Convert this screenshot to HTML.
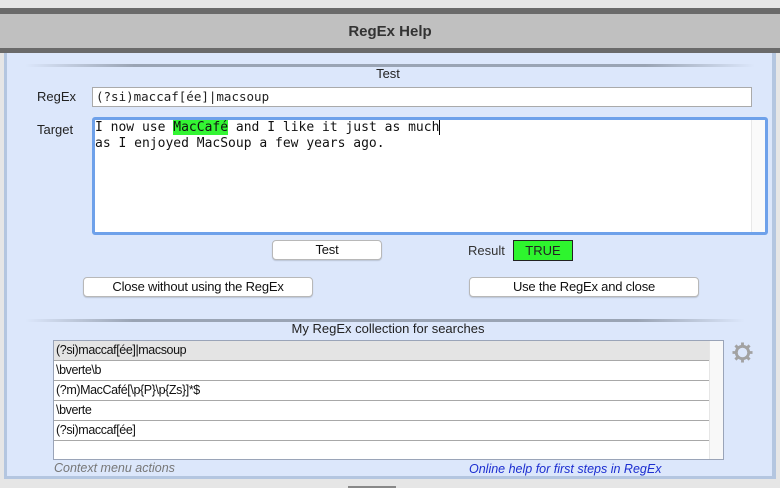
<!DOCTYPE html>
<html><head><meta charset="utf-8"><style>
*{margin:0;padding:0;box-sizing:border-box}
body{width:780px;height:488px;overflow:hidden;background:#e6e6e6;font-family:"Liberation Sans",sans-serif;position:relative;font-size:12px;color:#222}
.a{position:absolute}
.btn{position:absolute;background:#fff;border:1px solid #b8b8b8;border-radius:4px;text-align:center;font-size:13px;line-height:18px;box-shadow:0 1px 1px rgba(0,0,0,.15);color:#111;letter-spacing:-0.2px}
.sep{position:absolute;height:3px;background:linear-gradient(to right,rgba(150,160,180,0),#9aa4b4 15%,#9aa4b4 85%,rgba(150,160,180,0));border-radius:2px}
.row{position:absolute;left:54px;width:655px;height:20px;border-bottom:1px solid #a8a8a8;background:#fff;font-size:12.5px;line-height:19px;padding-left:2px;letter-spacing:-0.4px;color:#111}
.mono{font-family:"DejaVu Sans Mono","Liberation Mono",monospace;font-size:13px}
</style></head><body>
<div class="a" style="left:0;top:8px;width:780px;height:6px;background:#6a6a6a"></div>
<div class="a" style="left:0;top:14px;width:780px;height:34px;background:#c0c0c0;text-align:center;font-size:15px;font-weight:bold;line-height:36px;color:#333">RegEx Help</div>
<div class="a" style="left:0;top:48px;width:780px;height:5px;background:#6a6a6a"></div>
<div class="a" style="left:4px;top:53px;width:772px;height:426px;background:#b4c6e0"></div>
<div class="a" style="left:7px;top:53px;width:765px;height:423px;background:#dce7fb"></div>

<div class="sep" style="left:25px;top:64px;width:730px"></div>
<div class="a" style="left:0;top:66px;width:776px;text-align:center;font-size:13px">Test</div>
<div class="a" style="left:37px;top:89px;font-size:13px">RegEx</div>
<div class="a mono" style="left:92px;top:87px;width:660px;height:20px;background:#fff;border:1px solid #aaa;line-height:18px;padding-left:3px;font-size:12.5px">(?si)maccaf[ée]|macsoup</div>
<div class="a" style="left:37px;top:122px;font-size:13px">Target</div>
<div class="a mono" style="left:92px;top:117px;width:676px;height:118px;background:#fff;border:3px solid #6ea1ea;border-radius:3px;line-height:16px;padding:0;color:#111">I now use <span style="background:#33f533">MacCafé</span> and I like it just as much<span style="border-left:1px solid #000"></span><br>as I enjoyed MacSoup a few years ago.
<div class="a" style="right:0;top:0;width:14px;height:112px;background:#fafafa;border-left:1px solid #e8e8e8"></div></div>

<div class="btn" style="left:272px;top:240px;width:110px;height:20px">Test</div>
<div class="a" style="left:468px;top:243px;font-size:13px;color:#333">Result</div>
<div class="a" style="left:513px;top:240px;width:60px;height:21px;background:#2ef52e;border:1px solid #222;text-align:center;line-height:19px;font-size:13px">TRUE</div>
<div class="btn" style="left:83px;top:277px;width:230px;height:20px">Close without using the RegEx</div>
<div class="btn" style="left:469px;top:277px;width:230px;height:20px">Use the RegEx and close</div>

<div class="sep" style="left:25px;top:319px;width:720px"></div>
<div class="a" style="left:0;top:321px;width:776px;text-align:center;font-size:13px">My RegEx collection for searches</div>

<div class="a" style="left:53px;top:340px;width:671px;height:120px;background:#fff;border:1px solid #9aa4b8"></div>
<div class="row" style="top:341px;background:#e4e4e4">(?si)maccaf[ée]|macsoup</div>
<div class="row" style="top:361px">\bverte\b</div>
<div class="row" style="top:381px">(?m)MacCafé[\p{P}\p{Zs}]*$</div>
<div class="row" style="top:401px">\bverte</div>
<div class="row" style="top:421px">(?si)maccaf[ée]</div>
<div class="a" style="left:709px;top:341px;width:14px;height:118px;background:#f8f8f8;border-left:1px solid #e6e6e6"></div>

<svg class="a" style="left:732px;top:342px" width="21" height="21" viewBox="0 0 22 22"><g fill="#a2a2a2"><circle cx="11" cy="11" r="8"/><g stroke="#a2a2a2" stroke-width="3"><line x1="11" y1="0.5" x2="11" y2="21.5"/><line x1="0.5" y1="11" x2="21.5" y2="11"/><line x1="3.6" y1="3.6" x2="18.4" y2="18.4"/><line x1="18.4" y1="3.6" x2="3.6" y2="18.4"/></g></g><circle cx="11" cy="11" r="5" fill="#dce7fb"/></svg>

<div class="a" style="left:54px;top:461px;font-size:12.5px;font-style:italic;color:#777">Context menu actions</div>
<div class="a" style="left:469px;top:462px;font-size:12.5px;font-style:italic;color:#1c2ed0">Online help for first steps in RegEx</div>
<div class="a" style="left:348px;top:486px;width:48px;height:2px;background:#888"></div>
</body></html>
